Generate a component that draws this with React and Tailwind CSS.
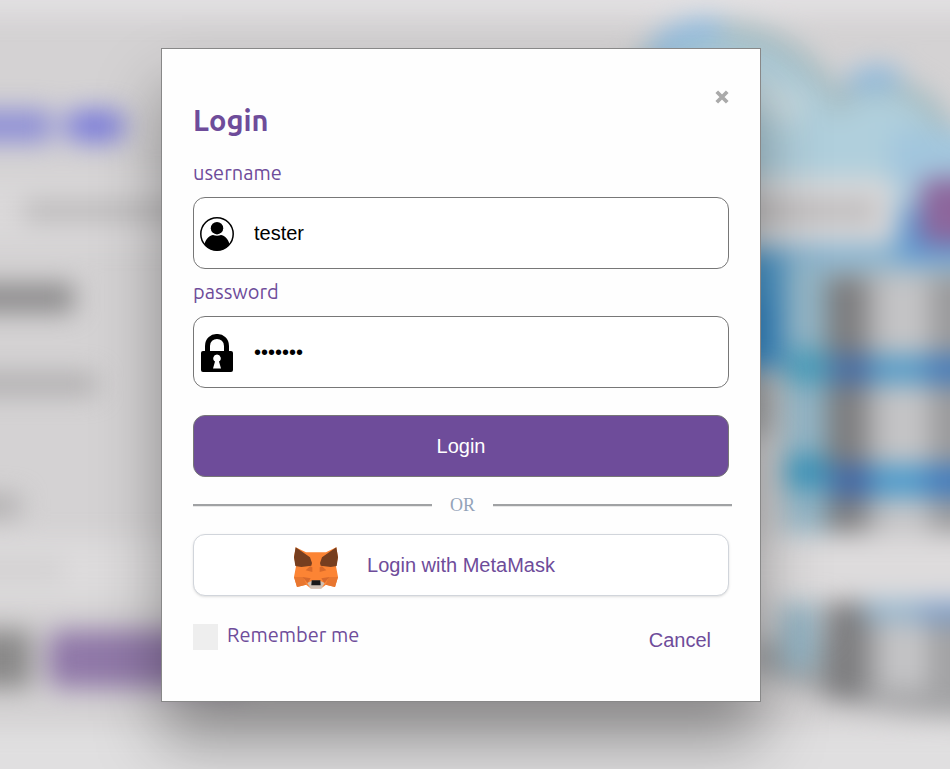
import React from 'react';

function CloudArt() {
  return (
    <svg
      viewBox="0 0 370 769"
      width="370"
      height="769"
      className="absolute top-0 left-[660px]"
      fill="none"
    >
      <path d="M10 96 C16 40 60 24 112 26 C160 30 200 58 220 92 C240 68 290 74 314 104 C334 122 340 150 370 180 L370 300 L0 300 L0 120 Z" fill="#b0cfdc" />
      <path d="M20 70 C40 36 76 30 112 32 C156 36 196 66 218 102 C240 80 285 80 312 110 C324 124 330 142 338 160" stroke="#a6bcc2" strokeWidth="20" />
      <path d="M36 54 C50 34 76 28 100 30" stroke="#8db9de" strokeWidth="22" />
      <path d="M232 86 C244 74 262 74 278 80" stroke="#8db9de" strokeWidth="20" />
      <path d="M130 70 L190 100 L170 130 L130 110 Z" fill="#c6d8de" />
      <rect x="270" y="130" width="100" height="60" fill="#a2c6dd" />
      <rect x="120" y="232" width="250" height="34" fill="#84b1cf" />
      <rect x="280" y="206" width="90" height="56" fill="#6098d0" />
      <rect x="110" y="255" width="55" height="115" fill="#4a96ca" />
      <rect x="110" y="300" width="44" height="60" fill="#3a8ac6" />
      <rect x="164" y="262" width="42" height="270" fill="#94b7c8" />
      <rect x="166" y="350" width="46" height="34" fill="#4a9fbd" />
      <rect x="164" y="455" width="48" height="34" fill="#3c96bc" />
      <rect x="110" y="375" width="44" height="60" fill="#a8a9aa" />

      <rect x="206" y="272" width="164" height="260" fill="#a7a7a9" />
      <rect x="206" y="276" width="38" height="256" fill="#7c7c7e" />
      <rect x="258" y="276" width="50" height="256" fill="#c4c4c6" />
      <rect x="314" y="276" width="56" height="256" fill="#9a9a9c" />
      <rect x="208" y="355" width="162" height="29" fill="#539bc8" />
      <rect x="212" y="355" width="38" height="29" fill="#466ca4" />
      <rect x="306" y="355" width="64" height="29" fill="#447cbc" />
      <rect x="208" y="465" width="162" height="32" fill="#4a9acc" />
      <rect x="212" y="465" width="38" height="32" fill="#4067a6" />
      <rect x="306" y="465" width="64" height="32" fill="#3f7cc0" />

      <path d="M130 640 L370 640 L370 716 C270 718 200 700 130 670 Z" fill="#a3a4a6" />
      <rect x="160" y="604" width="38" height="66" fill="#92b2c2" />
      <rect x="206" y="602" width="38" height="98" fill="#7c7c7e" />
      <rect x="244" y="602" width="126" height="104" fill="#a2a2a4" />
      <rect x="260" y="610" width="48" height="80" fill="#c4c4c6" />
      <rect x="244" y="598" width="62" height="22" fill="#8ab0cc" />
      <rect x="300" y="598" width="70" height="24" fill="#789bc8" />
    </svg>
  );
}

function Backdrop() {
  return (
    <div aria-hidden="true" className="absolute inset-0 overflow-hidden bg-[#d4d2d3]">
      <div className="absolute inset-y-0 -inset-x-10 blur-[13px]">
        <div className="absolute inset-x-0 -top-8 h-12 bg-[#e2e0e2]" />
        <CloudArt />
        <div className="relative flex flex-col pt-[110px]">
          <div className="flex gap-3">
            <div className="h-8 w-[92px] bg-[#8c8dd6]" />
            <div className="h-8 w-[62px] rounded-full bg-[#7b7cda]" />
          </div>
          <div className="mt-9 flex gap-6">
            <div className="flex h-[66px] w-[936px] shrink-0 items-center rounded-r-xl bg-[#dad8d9] pr-5 pl-16">
              <div className="h-5 flex-1 bg-[#b9b7b8]" />
            </div>
            <div className="h-[66px] w-40 shrink-0 rounded-xl bg-[#8d669c]" />
          </div>
          <div className="mt-10 h-7 w-[114px] bg-[#888788]" />
          <div className="mt-[62px] h-5 w-[136px] bg-[#acaaab]" />
          <div className="mt-[102px] h-5 w-[60px] bg-[#acaaab]" />
          <div className="mt-[22px] flex h-16 items-center bg-[#dddbdc]">
            <div className="h-3 w-[104px] bg-[#c9c7c8]" />
          </div>
          <div className="mt-7 flex gap-4">
            <div className="h-[58px] w-[72px] bg-[#8a8989]" />
            <div className="h-[58px] w-[200px] rounded-xl bg-[#9078a8]" />
          </div>
          <div className="mt-10 h-20 bg-[#e0dfe0]" />
        </div>
      </div>
    </div>
  );
}

function UserIcon() {
  return (
    <svg viewBox="0 0 34 34" className="h-[34px] w-[34px]" aria-hidden="true">
      <circle cx="17" cy="17" r="16.2" fill="#fff" stroke="#000" strokeWidth="1.5" />
      <path d="M4.500 27 C6 21 10 18.600 13 18 C15.500 19 18.500 19 21 18 C24 18.600 28 21 29.500 27 C24 35.500 10 35.500 4.500 27 Z" fill="#000" />
      <circle cx="17" cy="11.200" r="6.200" fill="#000" />
    </svg>
  );
}

function LockIcon() {
  return (
    <svg viewBox="0 0 32 38" className="h-[38px] w-8" aria-hidden="true">
      <path d="M6.500 19 V12 C6.500 -0.700 25.500 -0.700 25.500 12 V19" fill="none" stroke="#000" strokeWidth="5" />
      <rect x="0" y="17" width="32" height="21" rx="2" fill="#000" />
      <path d="M16 20.500 a3.800 3.800 0 0 1 2 7 L20 34.500 H12 L14 27.500 a3.800 3.800 0 0 1 2 -7 Z" fill="#fff" />
    </svg>
  );
}

function FoxIcon() {
  return (
    <svg viewBox="42 37 132 126" className="h-[42px] w-11" aria-hidden="true">
      <path d="M47 38 L78 53 H138 L169 38 L174 68 L168 95 L174 127 L165 157 L138 150 L124 161 H92 L78 150 L51 157 L42 127 L48 95 L42 68 Z" fill="#fc8434" />
      <path d="M42 127 H70 L79 150 L51 157 Z M174 127 H146 L137 150 L165 157 Z" fill="#e8762f" />
      <path d="M47 38 L90 68 L96 85 L94 93 L64 97 L46 94 L42 68 Z M169 38 L126 68 L120 85 L122 93 L152 97 L170 94 L174 68 Z" fill="#763e1f" />
      <path d="M77 107 L90 95 L97 98 L97 112 Z M139 107 L126 95 L119 98 L119 112 Z" fill="#d96a2a" />
      <path d="M68 127 L92 131 L83 146 Z M148 127 L124 131 L133 146 Z" fill="#d7692c" />
      <path d="M82 145 L96 138 H120 L134 145 L124 162 H92 Z" fill="#d0c1b4" />
      <path d="M95 137 H121 L122 152 H94 Z" fill="#181818" />
    </svg>
  );
}

function Field({ id, label, type, value, icon }) {
  return (
    <div>
      <label htmlFor={id} className="block text-[20px] leading-[30px]">
        {label}
      </label>
      <div className="relative mt-[9px]">
        <input
          id={id}
          type={type}
          defaultValue={value}
          className="block h-[72px] w-full rounded-xl border border-[#777] bg-white pr-5 pl-[60px] font-['Liberation_Sans',Arial,sans-serif] text-[20px] text-black outline-none"
        />
        <span className="pointer-events-none absolute inset-y-0 left-[7px] flex w-[34px] items-center justify-center pt-0.5">
          {icon}
        </span>
      </div>
    </div>
  );
}

export default function App() {
  return (
    <div className="relative min-h-screen overflow-hidden">
      <Backdrop />

      <div className="relative flex justify-center pt-12 pr-7">
        <form
          role="dialog"
          aria-labelledby="login-title"
          onSubmit={(e) => e.preventDefault()}
          className="w-[600px] border border-[#888] bg-[#fefefe] pt-[35px] pr-[31px] pb-[41px] pl-[31px] font-[Ubuntu,'Noto_Sans',sans-serif] text-[#6e4c9a] shadow-[0_40px_60px_rgba(0,0,0,0.34)]"
        >
          <div className="flex items-start justify-between">
            <h2 id="login-title" className="pt-4 text-[29px] leading-10 font-bold">
              Login
            </h2>
            <button type="button" aria-label="Close" className="pt-1.5 text-[#aaa]">
              <svg viewBox="1 1 12 12" className="h-3.5 w-3.5" aria-hidden="true">
                <path d="M2.500 2.500 L11.500 11.500 M11.500 2.500 L2.500 11.500" stroke="currentColor" strokeWidth="3.200" />
              </svg>
            </button>
          </div>

          <div className="mt-[18px] flex flex-col gap-2">
            <Field id="username" label="username" type="text" value="tester" icon={<UserIcon />} />
            <Field id="password" label="password" type="password" value="testing" icon={<LockIcon />} />
          </div>

          <button
            type="submit"
            className="mt-[27px] block h-[62px] w-full rounded-xl border border-[#777] bg-[#6e4c9a] font-['Liberation_Sans',Arial,sans-serif] text-[20px] text-white"
          >
            Login
          </button>

          <div className="mt-3.5 -mr-[3px] flex items-center gap-[18px]">
            <hr className="h-[3px] flex-1 border-t-2 border-b border-t-[#a0a2a4] border-b-[#e8e8e8]" />
            <span className="font-['Liberation_Serif',serif] text-[18px] leading-7 text-[#94a3b8]">OR</span>
            <hr className="h-[3px] flex-1 border-t-2 border-b border-t-[#a0a2a4] border-b-[#e8e8e8]" />
          </div>

          <button
            type="button"
            className="mt-[15px] grid h-[62px] w-full grid-cols-[1fr_auto_1fr] items-center rounded-xl border border-[#d1d5db] bg-white font-['Liberation_Sans',Arial,sans-serif] text-[20px] shadow-sm"
          >
            <span className="justify-self-end pt-1.5 pr-[29px]">
              <FoxIcon />
            </span>
            Login with MetaMask
          </button>

          <div className="mt-6 flex items-start justify-between">
            <label className="flex items-start gap-[9px] text-[20px] leading-[30px]">
              <input type="checkbox" className="mt-1 h-[26px] w-[25px] appearance-none bg-[#eee] checked:bg-[#6e4c9a]" />
              Remember me
            </label>
            <button
              type="button"
              className="h-10 px-[18px] font-['Liberation_Sans',Arial,sans-serif] text-[20px]"
            >
              Cancel
            </button>
          </div>
        </form>
      </div>
    </div>
  );
}
